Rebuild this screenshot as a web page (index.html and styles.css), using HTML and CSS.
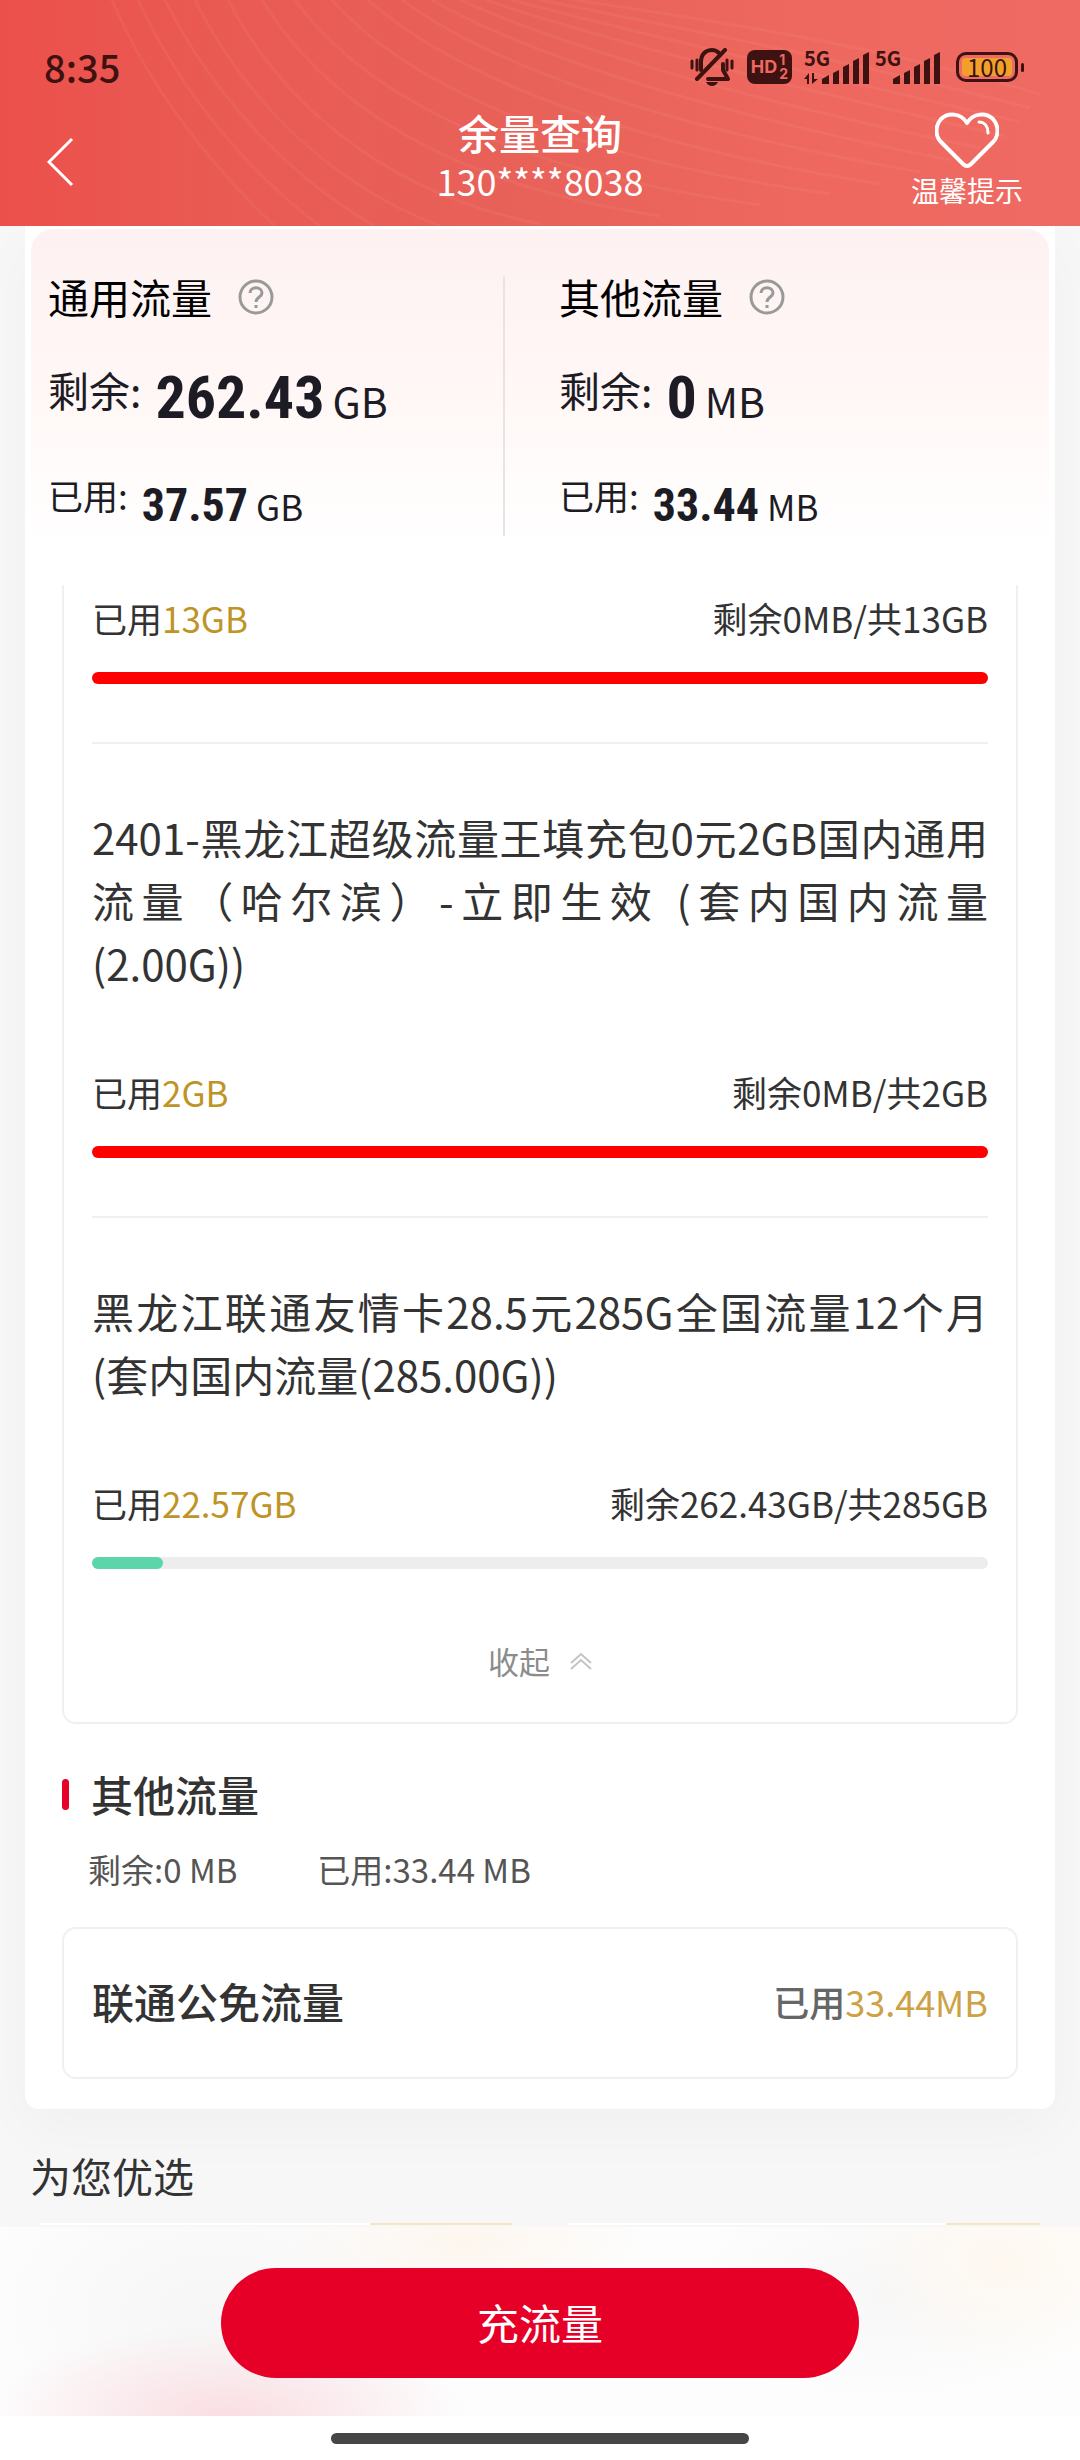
FILE: index.html
```html
<!DOCTYPE html>
<html lang="zh-CN">
<head>
  <meta charset="UTF-8" />
  <meta name="viewport" content="width=device-width, initial-scale=1" />
  <title>余量查询</title>
  <link rel="stylesheet" href="styles.css">
</head>
<body>

  <header class="header">
    <svg class="header-waves" viewBox="0 0 1080 226" preserveAspectRatio="none" aria-hidden="true">
      <path d="M112 0 C150 90 215 170 275 226" />
      <path d="M138 0 C180 90 245 170 320 226" />
      <path d="M165 0 C210 90 285 175 375 226" />
      <path d="M195 0 C240 90 320 180 440 226" />
      <path d="M228 0 C275 90 370 190 540 224" />
      <path d="M262 0 C315 85 420 180 660 216" />
      <path d="M295 0 C350 75 470 165 760 205" />
      <path d="M332 0 C390 65 520 150 830 194" />
      <path d="M368 0 C430 55 570 135 880 184" />
      <path d="M402 0 C470 50 620 120 920 172" />
      <path d="M432 0 C510 45 670 105 950 160" />
      <path d="M460 0 C550 40 710 92 980 148" />
      <path d="M486 0 C590 36 760 80 1005 136" />
      <path d="M512 0 C630 32 800 70 1020 122" />
      <path d="M540 0 C670 26 840 58 1030 108" />
      <path d="M575 0 C710 20 880 46 1040 94" />
    </svg>

    <div class="status-bar">
      <span class="status-time">8:35</span>
      <svg class="status-bell" viewBox="0 0 44 38" aria-hidden="true">
        <g fill="none" stroke="#3d1210" stroke-width="4" stroke-linecap="round" stroke-linejoin="round">
          <path d="M11 22 V14 C11 6 16 2 22 2 C25 2 27 3 29 5" />
          <path d="M33 16 V22 L38 31 H18" />
          <path d="M7 31 L35 2" />
          <path d="M2 13 V20 M42 13 V20 M7 12 V22 M37 12 V22" stroke-width="3" />
        </g>
        <path d="M16 34 H28 Q26 38 22 38 Q18 38 16 34 Z" fill="#3d1210" />
      </svg>
      <span class="status-hd">HD<span class="status-hd-sims"><span>1</span><span>2</span></span></span>
      <span class="signal">
        <span class="signal-type">5G</span>
        <svg class="signal-bars" viewBox="0 0 66 34" aria-hidden="true">
          <path d="M0 29 L5 23 V34 H3 V29 Z M8 23 H10 V29 H14 L8 34 Z" />
          <path d="M18 34 V29 L25 25 V34 Z M29 34 V23 L35 20 V34 Z M39 34 V17 L45 14 V34 Z M49 34 V11 L55 8 V34 Z M59 34 V5 L65 2 V34 Z" />
        </svg>
      </span>
      <span class="signal">
        <span class="signal-type">5G</span>
        <svg class="signal-bars" viewBox="0 0 66 34" aria-hidden="true">
          <path d="M18 34 V29 L25 25 V34 Z M29 34 V23 L35 20 V34 Z M39 34 V17 L45 14 V34 Z M49 34 V11 L55 8 V34 Z M59 34 V5 L65 2 V34 Z" />
        </svg>
      </span>
      <span class="battery"><span class="battery-level">100</span></span>
    </div>

    <nav class="nav-bar">
      <button type="button" class="back-btn" aria-label="返回">
        <svg viewBox="0 0 28 50" aria-hidden="true">
          <path d="M25 2 L2 25 L25 48" fill="none" stroke="#fff" stroke-width="3" />
        </svg>
      </button>
      <div class="nav-title">
        <h1>余量查询</h1>
        <p>130****8038</p>
      </div>
      <button type="button" class="tips-btn">
        <svg viewBox="0 0 64 56" aria-hidden="true">
          <path d="M32 11 C26 1 13 0 6 7 C0 14 0 24 6 30 L28 52 Q32 56 36 52 L58 30 C64 24 64 14 58 7 C51 0 38 1 32 11 Z" fill="none" stroke="#fff" stroke-width="4" stroke-linejoin="round" />
          <path d="M44 10 C50 10 53 15 53 21" fill="none" stroke="#fff" stroke-width="3" stroke-linecap="round" />
        </svg>
        <span>温馨提示</span>
      </button>
    </nav>
  </header>

  <main class="content">
    <div class="panel">
      <section class="summary">
        <div class="summary-col">
          <h2>通用流量
            <button type="button" class="help-btn" aria-label="通用流量说明">
              <svg viewBox="0 0 36 36" aria-hidden="true">
                <circle cx="18" cy="18" r="16" />
                <path d="M12 14 C12 7 24 7 24 14 C24 18 18 18 18 23" />
                <path d="M18 26 V29" />
              </svg>
            </button>
          </h2>
          <p class="amount amount-left">剩余:<span class="amount-value"><strong>262.43</strong><span>GB</span></span></p>
          <p class="amount amount-used">已用:<span class="amount-value"><strong>37.57</strong><span>GB</span></span></p>
        </div>
        <div class="summary-col">
          <h2>其他流量
            <button type="button" class="help-btn" aria-label="其他流量说明">
              <svg viewBox="0 0 36 36" aria-hidden="true">
                <circle cx="18" cy="18" r="16" />
                <path d="M12 14 C12 7 24 7 24 14 C24 18 18 18 18 23" />
                <path d="M18 26 V29" />
              </svg>
            </button>
          </h2>
          <p class="amount amount-left">剩余:<span class="amount-value"><strong>0</strong><span>MB</span></span></p>
          <p class="amount amount-used">已用:<span class="amount-value"><strong>33.44</strong><span>MB</span></span></p>
        </div>
      </section>

      <section class="packages">
        <article class="package">
          <div class="package-usage">
            <span>已用<em>13GB</em></span>
            <span>剩余0MB/共13GB</span>
          </div>
          <div class="bar"><div class="bar-fill bar-full" style="width: 100%"></div></div>
        </article>

        <article class="package">
          <h3>2401-黑龙江超级流量王填充包0元2GB国内通用流量（哈尔滨）-立即生效 (套内国内流量(2.00G))</h3>
          <div class="package-usage">
            <span>已用<em>2GB</em></span>
            <span>剩余0MB/共2GB</span>
          </div>
          <div class="bar"><div class="bar-fill bar-full" style="width: 100%"></div></div>
        </article>

        <article class="package">
          <h3>黑龙江联通友情卡28.5元285G全国流量12个月(套内国内流量(285.00G))</h3>
          <div class="package-usage">
            <span>已用<em>22.57GB</em></span>
            <span>剩余262.43GB/共285GB</span>
          </div>
          <div class="bar"><div class="bar-fill" style="width: 7.9%"></div></div>
        </article>

        <button type="button" class="collapse-btn">收起
          <svg viewBox="0 0 22 18" aria-hidden="true">
            <path d="M1 11 L11 2 L21 11 M1 17 L11 8 L21 17" fill="none" stroke="#c4c4c4" stroke-width="2" />
          </svg>
        </button>
      </section>

      <section class="other">
        <h2 class="section-title">其他流量</h2>
        <div class="other-total">
          <span>剩余:0 MB</span>
          <span>已用:33.44 MB</span>
        </div>
        <div class="other-item">
          <h3>联通公免流量</h3>
          <span>已用<em>33.44MB</em></span>
        </div>
      </section>
    </div>

    <h2 class="recommend-title">为您优选</h2>
    <div class="recommend-list">
      <div class="recommend-card"></div>
      <div class="recommend-card recommend-card-short"></div>
    </div>
  </main>

  <footer class="footer">
    <div class="footer-action">
      <button type="button" class="buy-btn">充流量</button>
    </div>
    <div class="home-indicator"></div>
  </footer>

</body>
</html>
```
FILE: styles.css
```css
* {
  box-sizing: border-box;
}

body {
  margin: 0;
  min-height: 100vh;
  display: flex;
  flex-direction: column;
  background: #f7f7f7;
  color: #333;
  font-family: "Noto Sans CJK SC", sans-serif;
  font-size: 35px;
  line-height: 1;
}

h1, h2, h3, p {
  margin: 0;
  font-weight: 400;
}

em {
  font-style: normal;
}

button {
  border: none;
  padding: 0;
  background: none;
  font-family: inherit;
  cursor: pointer;
}

svg {
  display: block;
}

/* Header */
.header {
  position: relative;
  height: 226px;
  background: linear-gradient(90deg, #ed504b 0%, #e95a53 20%, #e8625a 50%, #ee6860 75%, #ef6a62 100%);
}

.header-waves {
  position: absolute;
  top: 0; left: 0;
  width: 100%;
  height: 100%;
  fill: none;
  stroke: rgba(255, 190, 170, 0.08);
  stroke-width: 3;
}

.status-bar {
  position: relative;
  display: flex;
  align-items: center;
  padding: 48px 62px 0 44px;
  color: #3d1210;
}

.status-time {
  font-size: 38px;
  font-weight: 500;
  line-height: 38px;
  margin-right: auto;
}

.status-bell {
  width: 44px;
  height: 38px;
  margin-right: 13px;
}

.status-hd {
  display: flex;
  align-items: center;
  gap: 2px;
  height: 34px;
  padding: 0 4px;
  border-radius: 8px;
  background: #3d1210;
  color: #ee6860;
  font-family: Inter, sans-serif;
  font-size: 18px;
  font-weight: 700;
}

.status-hd-sims {
  display: flex;
  flex-direction: column;
  font-size: 14px;
}

.signal {
  position: relative;
  width: 66px;
  height: 34px;
  margin-left: 12px;
}

.signal + .signal {
  margin-left: 5px;
}

.signal-type {
  position: absolute;
  top: 0;
  left: 0;
  font-size: 20px;
  font-weight: 700;
  line-height: 16px;
}

.signal-bars {
  width: 66px;
  height: 34px;
  fill: #3d1210;
}

.battery {
  position: relative;
  margin-left: 15px;
  padding: 3px;
  border: 3px solid #3d1210;
  border-radius: 10px;
}

.battery::after {
  content: "";
  position: absolute;
  top: 8px;
  right: -9px;
  width: 3px;
  height: 9px;
  border-radius: 2px;
  background: #3d1210;
}

.battery-level {
  display: block;
  padding: 0 5px;
  border-radius: 3px;
  background: #f2a02c;
  font-size: 24px;
  line-height: 18px;
}

.nav-bar {
  position: relative;
  display: grid;
  grid-template-columns: 1fr auto 1fr;
  align-items: start;
  padding: 22px 47px 0;
  color: #fff;
}

.back-btn {
  justify-self: start;
  padding-top: 29px;
}

.back-btn svg {
  width: 28px;
  height: 50px;
}

.nav-title {
  text-align: center;
}

.nav-title h1 {
  font-size: 41px;
  font-weight: 500;
  line-height: 48px;
}

.nav-title p {
  font-size: 36px;
  line-height: 48px;
}

.tips-btn {
  justify-self: end;
  display: flex;
  flex-direction: column;
  align-items: center;
  gap: 8px;
  margin-right: 10px;
  padding-top: 4px;
  color: #fff;
  font-size: 28px;
  line-height: 28px;
}

.tips-btn svg {
  width: 64px;
  height: 56px;
}

/* Panel */
.content {
  flex: 1;
}

.panel {
  margin: 0 25px;
  padding: 3px 6px 30px;
  background: #fff;
  border-radius: 0 0 14px 14px;
  box-shadow: 0 20px 60px rgba(0, 0, 0, 0.03);
}

.summary {
  display: grid;
  grid-template-columns: 5fr 6fr;
  padding: 47px 0 49px 17px;
  border-radius: 22px 22px 0 0;
  background: linear-gradient(180deg, #fdf2f1 0%, #fff6f5 40%, #fffbfa 65%, #fff 90%);
  color: #1d1c24;
}

.summary-col {
  padding-bottom: 8px;
}

.summary-col + .summary-col {
  border-left: 2px solid #e6e4e4;
  padding-left: 54px;
}

.summary-col h2 {
  display: flex;
  align-items: center;
  gap: 26px;
  color: #000;
  font-size: 41px;
}

.help-btn svg {
  width: 36px;
  height: 36px;
  fill: none;
  stroke: #999;
  stroke-width: 3;
}

.amount {
  display: flex;
  align-items: center;
}

.amount-value {
  display: flex;
  align-items: baseline;
  gap: 8px;
  margin-left: 14px;
}

.amount-value strong {
  font-family: "Liberation Sans Narrow", "Roboto Condensed", Roboto, sans-serif;
  font-weight: 700;
}

.amount-left {
  margin-top: 33px;
  font-size: 41px;
}

.amount-left .amount-value {
  padding-top: 18px;
}

.amount-left strong {
  font-size: 60px;
}

.amount-used {
  margin-top: 32px;
  font-size: 35px;
}

.amount-used .amount-value {
  padding-top: 22px;
}

.amount-used strong {
  font-size: 46px;
}

/* Package list */
.packages {
  margin: 0 31px;
  padding: 9px 28px 44px;
  border: 2px solid #f0f0f0;
  border-top: none;
  border-radius: 0 0 14px 14px;
}

.package + .package {
  margin-top: 58px;
  padding-top: 61px;
  border-top: 2px solid #f0f0f0;
}

.package h3 {
  margin-bottom: 74px;
  font-size: 42px;
  line-height: 63px;
  text-align: justify;
}

.package-usage {
  display: flex;
  justify-content: space-between;
  line-height: 48px;
}

.package-usage em {
  color: #bf9426;
}

.bar {
  height: 12px;
  margin-top: 30px;
  border-radius: 6px;
  background: #ededed;
}

.bar-fill {
  height: 100%;
  border-radius: 6px;
  background: #5dd5aa;
}

.bar-full {
  background: #fe0000;
}

.collapse-btn {
  display: flex;
  align-items: center;
  gap: 20px;
  margin: 75px auto 0;
  color: #8c8c8c;
  font-size: 31px;
  line-height: 34px;
}

.collapse-btn svg {
  width: 22px;
  height: 18px;
}

/* Other data */
.other {
  margin: 0 31px;
}

.section-title {
  display: flex;
  align-items: center;
  gap: 22px;
  margin-top: 46px;
  font-size: 42px;
  font-weight: 500;
  line-height: 48px;
}

.section-title::before {
  content: "";
  width: 7px;
  height: 31px;
  border-radius: 4px;
  background: #e60027;
}

.other-total {
  display: flex;
  gap: 80px;
  margin-top: 30px;
  padding-left: 26px;
  color: #555;
  font-size: 33px;
  line-height: 42px;
}

.other-item {
  display: flex;
  align-items: center;
  justify-content: space-between;
  margin-top: 37px;
  padding: 48px 28px 52px;
  border: 2px solid #f0f0f0;
  border-radius: 14px;
  color: #666;
  font-size: 36px;
  font-weight: 500;
}

.other-item h3 {
  color: #333;
  font-size: 42px;
  font-weight: 500;
  line-height: 48px;
}

.other-item em {
  color: #cda145;
  font-weight: 400;
}

/* Recommendations */
.recommend-title {
  margin: 42px 30px 24px;
  font-size: 41px;
  line-height: 48px;
}

.recommend-list {
  display: flex;
  gap: 56px;
  padding: 0 40px;
}

.recommend-card {
  flex: 1;
  height: 2px;
  background: linear-gradient(90deg, #fff 70%, #f6e7c4 70%);
}

.recommend-card-short {
  background: linear-gradient(90deg, #fff 80%, #f6e7c4 80%);
}

/* Footer */
.footer {
  background: #fff;
}

.footer-action {
  display: flex;
  justify-content: center;
  padding: 41px 0 38px;
  background:
    radial-gradient(ellipse 240px 90px at 21% 100%, rgba(250, 215, 221, 0.8), rgba(250, 215, 221, 0)),
    radial-gradient(ellipse 180px 60px at 43% 8%, #fdf6ee, rgba(253, 246, 238, 0)),
    radial-gradient(ellipse 160px 110px at 93% 18%, #fef8f0, rgba(254, 248, 240, 0)),
    radial-gradient(ellipse 260px 160px at 20% 45%, #f6f6f6, rgba(246, 246, 246, 0)),
    radial-gradient(ellipse 200px 110px at 82% 35%, #f7f7f8, rgba(247, 247, 248, 0)),
    #fdfdfd;
}

.buy-btn {
  width: 59%;
  height: 110px;
  padding-bottom: 4px;
  border-radius: 55px;
  background: #e60027;
  color: #fff;
  font-size: 42px;
}

.home-indicator {
  width: 418px;
  height: 11px;
  margin: 17px auto 16px;
  border-radius: 6px;
  background: #464646;
}
```
